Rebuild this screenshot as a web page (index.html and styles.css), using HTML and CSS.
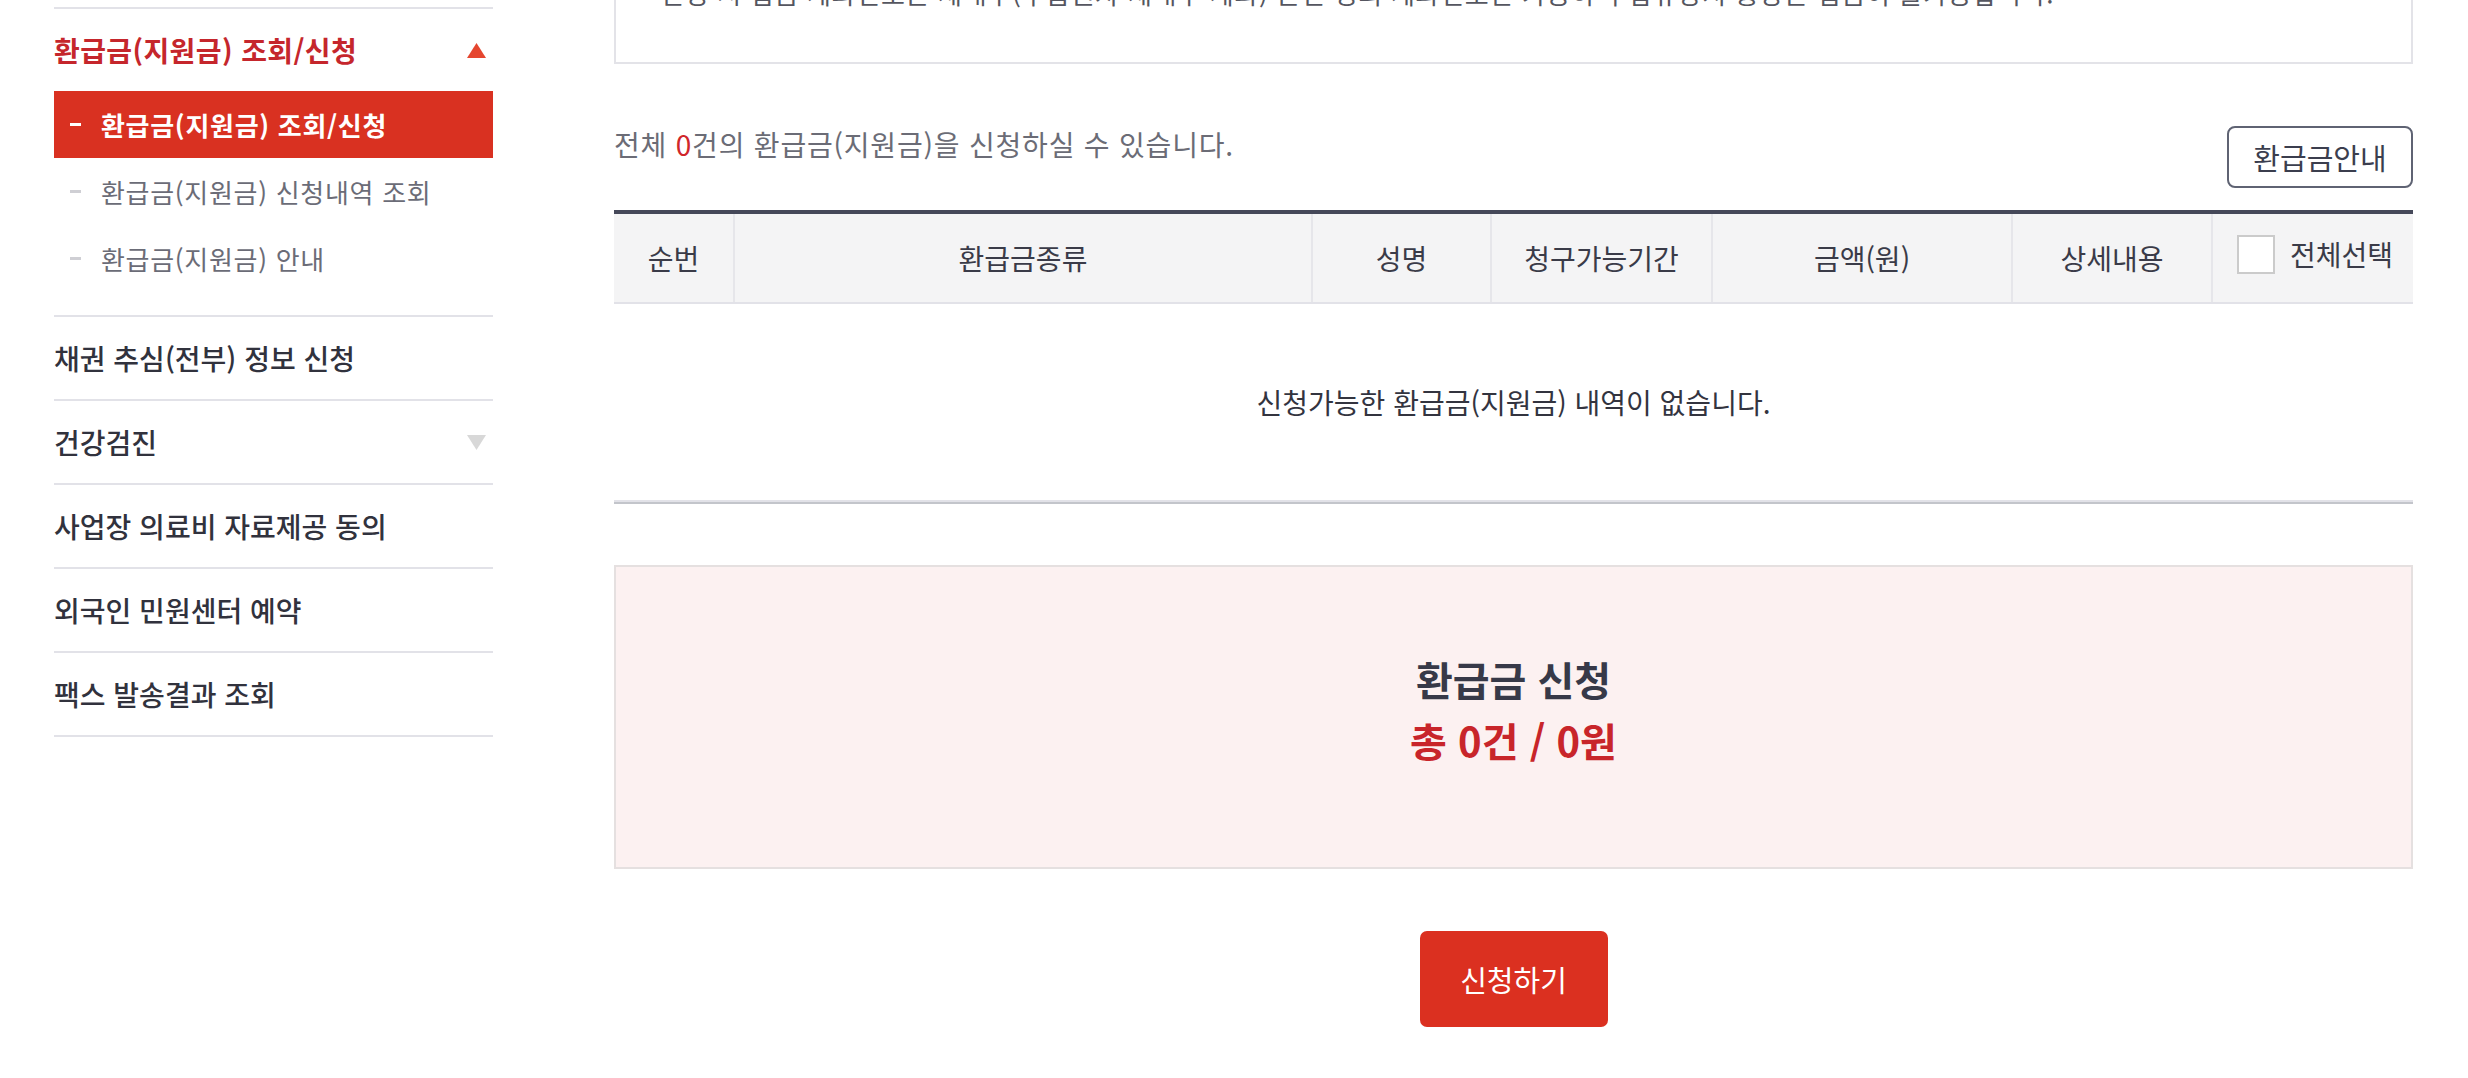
FILE: index.html
```html
<!DOCTYPE html>
<html lang="ko">

<head>
    <meta charset="UTF-8">
    <meta name="viewport" content="width=device-width, initial-scale=1.0">
    <title>환급금(지원금) 조회/신청</title>
    <link rel="stylesheet" href="styles.css">
</head>

<body>
    <div class="wrap">
        <!-- 왼쪽 메뉴 -->
        <nav class="snb">
            <ul>
                <li class="snb-item open">
                    <a href="javascript:;" class="snb-title">
                        환급금(지원금) 조회/신청
                        <svg class="arrow" width="19" height="15" viewBox="0 0 19 15"><polygon points="9.5,0 19,15 0,15" fill="#e5462f"/></svg>
                    </a>
                    <ul class="snb-sub">
                        <li class="on"><a href="javascript:;">환급금(지원금) 조회/신청</a></li>
                        <li><a href="javascript:;">환급금(지원금) 신청내역 조회</a></li>
                        <li><a href="javascript:;">환급금(지원금) 안내</a></li>
                    </ul>
                </li>
                <li class="snb-item"><a href="javascript:;" class="snb-title">채권 추심(전부) 정보 신청</a></li>
                <li class="snb-item">
                    <a href="javascript:;" class="snb-title">
                        건강검진
                        <svg class="arrow" width="19" height="15" viewBox="0 0 19 15"><polygon points="0,0 19,0 9.5,15" fill="#d8d8d8"/></svg>
                    </a>
                </li>
                <li class="snb-item"><a href="javascript:;" class="snb-title">사업장 의료비 자료제공 동의</a></li>
                <li class="snb-item"><a href="javascript:;" class="snb-title">외국인 민원센터 예약</a></li>
                <li class="snb-item"><a href="javascript:;" class="snb-title">팩스 발송결과 조회</a></li>
            </ul>
        </nav>

        <!-- 본문 -->
        <div class="content">
            <div class="notice">
                <p>신청 시 입금 계좌번호는 세대주(수급권자 세대주 계좌) 본인 명의 계좌번호만 가능하며 압류방지 통장은 입금이 불가능합니다.</p>
            </div>

            <div class="list-top">
                <p class="total">전체 <em>0</em>건의 환급금(지원금)을 신청하실 수 있습니다.</p>
                <a href="javascript:;" class="btn-line">환급금안내</a>
            </div>

            <div class="tbl">
                <table>
                    <colgroup>
                        <col style="width:120px">
                        <col style="width:578px">
                        <col style="width:179px">
                        <col style="width:221px">
                        <col style="width:300px">
                        <col style="width:200px">
                        <col style="width:201px">
                    </colgroup>
                    <thead>
                        <tr>
                            <th>순번</th>
                            <th>환급금종류</th>
                            <th>성명</th>
                            <th>청구가능기간</th>
                            <th>금액(원)</th>
                            <th>상세내용</th>
                            <th>
                                <label class="chk"><input type="checkbox"><span class="box"></span>전체선택</label>
                            </th>
                        </tr>
                    </thead>
                    <tbody>
                        <tr>
                            <td colspan="7" class="empty">신청가능한 환급금(지원금) 내역이 없습니다.</td>
                        </tr>
                    </tbody>
                </table>
            </div>

            <div class="sum-box">
                <p class="sum-title">환급금 신청</p>
                <p class="sum-total">총 0건 / 0원</p>
            </div>

            <div class="btn-area">
                <a href="javascript:;" class="btn-red">신청하기</a>
            </div>
        </div>
    </div>
</body>

</html>
```

FILE: styles.css
```css
* {
    padding: 0;
    margin: 0;
    box-sizing: border-box;
}

ul,
li {
    list-style: none;
}

a {
    text-decoration: none;
    color: inherit;
}

em {
    font-style: normal;
}

body {
    font-family: "Noto Sans CJK KR", "Noto Sans", sans-serif;
    font-size: 28px;
    color: #33343f;
    background: #fff;
}

.wrap {
    display: flex;
    gap: 121px;
    padding: 0 55px 0 54px;
}

/* 왼쪽 메뉴 */
.snb {
    width: 439px;
    flex: none;
    padding-top: 7px;
}

.snb > ul {
    border-top: 2px solid #e2e2e8;
}

.snb-item {
    border-bottom: 2px solid #e2e2e8;
}

.snb-title {
    display: flex;
    align-items: center;
    justify-content: space-between;
    height: 82px;
    padding-right: 7px;
    font-weight: 500;
    color: #31323d;
}

.open .snb-title {
    color: #c5262c;
    font-weight: 700;
    letter-spacing: 0.4px;
}

.snb-sub {
    padding-bottom: 23px;
}

.snb-sub li a {
    display: flex;
    align-items: center;
    height: 67px;
    padding-left: 16px;
    font-size: 26px;
    letter-spacing: 0.7px;
    color: #6b6c77;
}

.snb-sub li a::before {
    content: "";
    width: 11px;
    height: 3px;
    margin-right: 20px;
    background: #cfcfd4;
}

.snb-sub li.on a {
    background: #d93121;
    color: #fff;
    font-weight: 700;
}

.snb-sub li.on a::before {
    background: #fff;
}

/* 본문 */
.content {
    flex: 1;
    min-width: 0;
}

.notice {
    margin-top: -49px;
    padding: 20px 44px 50px;
    border: 2px solid #e3e3e8;
    color: #555660;
    font-size: 26px;
    line-height: 39px;
    letter-spacing: 0.7px;
    white-space: nowrap;
}

.list-top {
    display: flex;
    justify-content: space-between;
    align-items: flex-start;
    margin-top: 62px;
}

.total {
    line-height: 36px;
    letter-spacing: 0.8px;
    color: #6b6c76;
}

.total em {
    color: #d0262a;
}

.btn-line {
    display: flex;
    align-items: center;
    justify-content: center;
    width: 186px;
    height: 62px;
    border: 2px solid #5f6373;
    border-radius: 8px;
    font-size: 29px;
    color: #3b3e4e;
}

.tbl {
    margin-top: 22px;
    border-bottom: 2px solid #c3c5cb;
}

.tbl table {
    width: 100%;
    table-layout: fixed;
    border-collapse: collapse;
    border-top: 4px solid #454859;
}

.tbl th {
    height: 91px;
    background: #f4f4f5;
    border-bottom: 2px solid #e2e2e8;
    font-weight: 400;
    color: #3a3b48;
}

.tbl th + th {
    border-left: 2px solid #e6e6ea;
}

.chk {
    display: inline-flex;
    align-items: center;
    gap: 15px;
    margin-left: 4px;
}

.chk input {
    display: none;
}

.chk .box {
    width: 38px;
    height: 39px;
    border: 2px solid #cbcbcb;
    background: #fff;
}

.tbl td.empty {
    height: 198px;
    text-align: center;
    border-bottom: 2px solid #e2e2e8;
    color: #33343f;
}

.sum-box {
    margin-top: 61px;
    height: 304px;
    padding-top: 82px;
    border: 2px solid #e5e0e0;
    background: #fcf1f1;
    text-align: center;
    font-size: 40px;
    font-weight: 700;
    line-height: 61px;
}

.sum-title {
    color: #373948;
}

.sum-total {
    color: #c8252a;
}

.btn-area {
    margin-top: 62px;
    text-align: center;
}

.btn-red {
    display: inline-flex;
    align-items: center;
    justify-content: center;
    width: 188px;
    height: 96px;
    border-radius: 7px;
    background: #db3020;
    font-size: 29px;
    color: #fff;
}
```
